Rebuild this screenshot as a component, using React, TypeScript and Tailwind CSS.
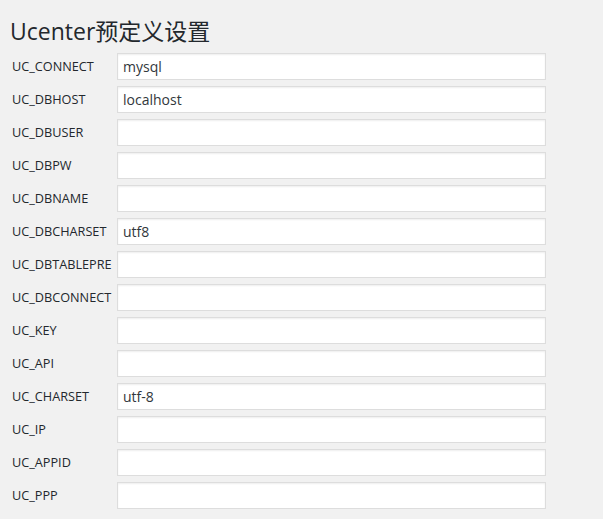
import React from 'react';

const fields: { key: string; value: string }[] = [
  { key: 'UC_CONNECT', value: 'mysql' },
  { key: 'UC_DBHOST', value: 'localhost' },
  { key: 'UC_DBUSER', value: '' },
  { key: 'UC_DBPW', value: '' },
  { key: 'UC_DBNAME', value: '' },
  { key: 'UC_DBCHARSET', value: 'utf8' },
  { key: 'UC_DBTABLEPRE', value: '' },
  { key: 'UC_DBCONNECT', value: '' },
  { key: 'UC_KEY', value: '' },
  { key: 'UC_API', value: '' },
  { key: 'UC_CHARSET', value: 'utf-8' },
  { key: 'UC_IP', value: '' },
  { key: 'UC_APPID', value: '' },
  { key: 'UC_PPP', value: '' },
];

export default function App() {
  return (
    <div
      className="min-h-screen w-full bg-[#f1f1f1] text-[#23282d] pt-[17px]"
      style={{ fontFamily: '"Open Sans", "Noto Sans CJK SC", sans-serif' }}
    >
      <h2 className="pl-[10px] text-[23px] leading-[29px] font-normal mb-[7px]">Ucenter预定义设置</h2>
      <div className="flex flex-col gap-[6px]">
        {fields.map((f) => (
          <div key={f.key} className="flex items-center">
            <label className="w-[117px] pl-[12px] text-[12.7px] text-[#23282d] whitespace-nowrap overflow-hidden">{f.key}</label>
            <input
              type="text"
              defaultValue={f.value}
              className="w-[429px] h-[27px] bg-white border border-[#dddddd] shadow-[inset_0_1px_2px_rgba(0,0,0,0.07)] px-[5px] text-[14px] text-[#32373c] outline-none"
            />
          </div>
        ))}
      </div>
    </div>
  );
}
